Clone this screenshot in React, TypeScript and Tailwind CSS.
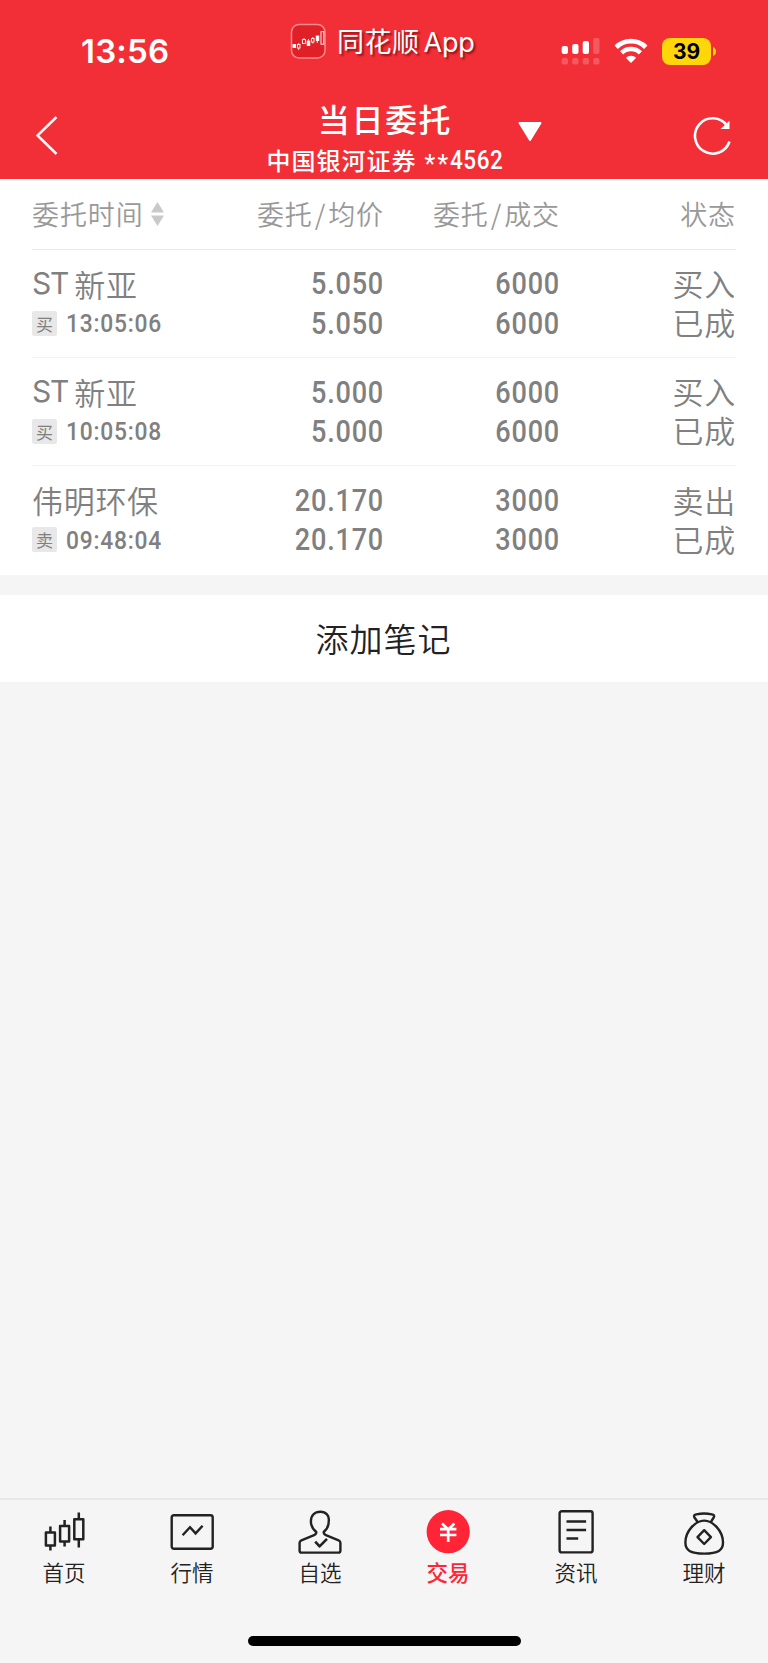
import type { ReactNode } from "react";

interface Order {
  name: ReactNode;
  side: string;
  time: string;
  prices: [string, string];
  amounts: [string, string];
  status: [string, string];
}

const stXinya = (
  <>
    <span className="mr-[6px] font-['Inter'] text-[30px] font-normal tracking-[-1.2px]">ST</span>新亚
  </>
);

const orders: Order[] = [
  { name: stXinya, side: "买", time: "13:05:06", prices: ["5.050", "5.050"], amounts: ["6000", "6000"], status: ["买入", "已成"] },
  { name: stXinya, side: "买", time: "10:05:08", prices: ["5.000", "5.000"], amounts: ["6000", "6000"], status: ["买入", "已成"] },
  { name: "伟明环保", side: "卖", time: "09:48:04", prices: ["20.170", "20.170"], amounts: ["3000", "3000"], status: ["卖出", "已成"] },
];

function AppLogo() {
  return (
    <svg width="36" height="36" viewBox="0 0 36 36" fill="none">
      <rect x="1.5" y="1.500" width="33.500" height="33.500" rx="7.500" fill="#e01f26" stroke="#fa8a8d" strokeWidth="1.500" />
      <g stroke="#fff" strokeWidth="0.900">
        <rect x="3" y="21.500" width="2.600" height="3" fill="#fff" />
        <path d="M8.700 20v1.500M8.700 25v2M14 15v1.500M18.500 16v1.500M22.800 14v1.500M22.800 19v1.500M27.300 18v2" />
        <rect x="7.400" y="21.500" width="2.600" height="3.500" />
        <rect x="12.400" y="16.500" width="3" height="4" />
        <rect x="17.200" y="18" width="2.600" height="4.500" fill="#fff" />
        <rect x="21.600" y="15.500" width="2.400" height="3.500" />
        <rect x="26.200" y="13" width="2.600" height="4.500" fill="#fff" />
        <rect x="31" y="8.700" width="2.800" height="12.500" />
      </g>
    </svg>
  );
}

function SignalIcon() {
  return (
    <svg width="40" height="28" viewBox="0 0 40 28" fill="#fff">
      <rect x="0.700" y="9" width="6.300" height="8" rx="2" />
      <rect x="11.200" y="7" width="6.300" height="10" rx="2" />
      <rect x="21.700" y="4" width="6.300" height="13" rx="2" />
      <g opacity=".2">
        <rect x="32.200" y="1" width="6.300" height="16" rx="2" />
        <rect x="0.700" y="21" width="6.300" height="6.500" rx="2" />
        <rect x="11.200" y="21" width="6.300" height="6.500" rx="2" />
        <rect x="21.700" y="21" width="6.300" height="6.500" rx="2" />
        <rect x="32.200" y="21" width="6.300" height="6.500" rx="2" />
      </g>
    </svg>
  );
}

function WifiIcon() {
  return (
    <svg width="34" height="26" viewBox="0 0 34 26" fill="none">
      <path d="M2.200 9.200a21.200 21.200 0 0 1 29.600 0" stroke="#fff" strokeWidth="4.800" />
      <path d="M7.600 14.800a13.500 13.500 0 0 1 18.800 0" stroke="#fff" strokeWidth="4.600" />
      <path d="M17 25l-5.200-5.200a7.500 7.500 0 0 1 10.400 0z" fill="#fff" />
    </svg>
  );
}

function CandlesIcon() {
  return (
    <svg width="42" height="42" viewBox="0 0 42 42" fill="none" stroke="#222" strokeWidth="2.500" strokeLinejoin="round">
      <rect x="2.900" y="20.500" width="9" height="13" />
      <rect x="17.100" y="14" width="9" height="15.500" />
      <rect x="31.300" y="7.200" width="9" height="20" />
      <path d="M7.400 14.500v6M7.400 33.500v5M21.600 8v6M21.600 29.500v5M35.800.5v6.700M35.800 27.200v8.300" />
    </svg>
  );
}

function MarketIcon() {
  return (
    <svg width="44" height="44" viewBox="0 0 44 44" fill="none" stroke="#222" strokeWidth="2.400">
      <rect x="1.700" y="5.200" width="41" height="33.600" rx="2.200" />
      <path d="M12.600 25.200l7.400-7.900 5.600 6.100 7-7.700" />
    </svg>
  );
}

function PersonIcon() {
  return (
    <svg width="44" height="44" viewBox="0 0 44 44" fill="none" stroke="#222" strokeWidth="2.400" strokeLinejoin="round">
      <path d="M18.300 22c0 1.700-.7 2.500-2.200 3.100L3.400 30.300c-1.200.5-1.800 1.200-1.800 2.400v8c0 1.300.6 1.900 1.900 1.900h37c1.300 0 1.900-.6 1.900-1.900v-8c0-1.200-.6-1.900-1.800-2.400l-12.700-5.200c-1.500-.6-2.200-1.400-2.200-3.100 2.800-2.300 5-5.200 5-10.500C31.700 5.400 27.900 1.800 22.300 1.800s-9.400 3.600-9.400 9.700c0 5.300 2.600 8.200 5.400 10.500z" />
      <path d="M17.200 31.600l4.400 4.800 7.400-7.600" strokeWidth="2.600" />
    </svg>
  );
}

function TradeIcon() {
  return (
    <svg width="44" height="44" viewBox="0 0 44 44" fill="none">
      <circle cx="22.200" cy="21.700" r="21.600" fill="#ff2436" />
      <path d="M16 13.500L22.200 19.500l6.200-6M14 19.200h16.400M14 25h16.400M22.200 19v13" stroke="#fff" strokeWidth="2.700" />
    </svg>
  );
}

function NewsIcon() {
  return (
    <svg width="44" height="44" viewBox="0 0 44 44" fill="none" stroke="#222" strokeWidth="2.400">
      <rect x="5.600" y="1.200" width="33" height="41.200" rx="2.200" />
      <path d="M12.500 11.500h19.600M12.500 20h19.600M12.500 28.500h11.700" />
    </svg>
  );
}

function MoneyBagIcon() {
  return (
    <svg className="overflow-visible" width="44" height="44" viewBox="0 0 44 44" fill="none" stroke="#222" strokeWidth="2.400" strokeLinejoin="round">
      <path d="M16 12.500L12.300 7.200c-.8-1.700.2-2.500 2-2.900 5-1.100 10.600-1.100 15.600 0 1.800.4 2.800 1.200 2 2.900L28.600 12.500" />
      <path d="M22.200 10.600c-8.500 0-18.800 10.200-18.800 22 0 7.600 4.700 11 18.800 11s18.800-3.400 18.800-11c0-11.800-10.300-22-18.800-22z" />
      <path d="M22.200 20.200l6.700 6.900-6.700 6.900-6.700-6.900z" />
    </svg>
  );
}

const tabs: { label: string; icon: ReactNode; active?: boolean }[] = [
  { label: "首页", icon: <CandlesIcon /> },
  { label: "行情", icon: <MarketIcon /> },
  { label: "自选", icon: <PersonIcon /> },
  { label: "交易", icon: <TradeIcon />, active: true },
  { label: "资讯", icon: <NewsIcon /> },
  { label: "理财", icon: <MoneyBagIcon /> },
];

function StatusBar() {
  return (
    <div className="flex h-[88px] items-start">
      <time className="ml-[81px] mt-[31px] w-[209px] font-['Inter'] text-[33px] font-semibold leading-[40px] tracking-[0.2px]">13:56</time>
      <div className="mt-[23px] flex h-9 w-[271px] items-center">
        <AppLogo />
        <span className="ml-[11px] flex items-center whitespace-nowrap [text-shadow:2px_2px_2px_rgba(90,0,0,0.6)]">
          <span className="text-[27px] leading-9 tracking-[0.500px]">同花顺</span>
          <span className="ml-[4px] mt-[3px] font-['Inter'] text-[27px] leading-9 tracking-[-0.200px]">App</span>
        </span>
      </div>
      <div className="mt-[37px] flex h-7 items-center">
        <SignalIcon />
        <span className="ml-[13px]"><WifiIcon /></span>
        <span className="ml-[14px] flex h-[27px] w-[49px] items-center justify-center rounded-[8px] bg-[#ffd60a] font-['Inter'] text-[21px] font-bold leading-none text-black">39</span>
        <svg className="ml-[2px]" width="3" height="9" viewBox="0 0 3 9"><path d="M0 0q3 1.500 3 4.500T0 9z" fill="#ffd60a" /></svg>
      </div>
    </div>
  );
}

function TitleBar() {
  return (
    <div className="flex h-[91px] items-start">
      <svg className="ml-[34px] mt-[27px]" width="26" height="42" viewBox="0 0 26 42" fill="none">
        <path d="M22.500 2L3.500 20.500l19 18.500" stroke="#fff" strokeWidth="2.500" />
      </svg>
      <div className="ml-[190px] mt-[9px] flex w-[268px] flex-col items-center">
        <h1 className="h-11 pl-[2px] text-[32px] font-medium leading-[43px] tracking-[1.600px]">当日委托</h1>
        <p className="mt-px flex h-9 items-center whitespace-nowrap text-[24px] font-medium leading-9 tracking-[1px]">
          中国银河证券
          <span className="ml-[8px] mt-[10px] font-['Roboto'] text-[25px] font-normal tracking-[2.200px]">**</span>
          <span className="mt-[2px] w-[51px] origin-left scale-x-[0.9] font-['Roboto'] text-[25px] tracking-[0.600px]">4562</span>
        </p>
      </div>
      <svg className="mt-[33px]" width="24" height="22" viewBox="0 0 24 22">
        <path d="M1.500 2h21L12 19z" fill="#fff" stroke="#fff" strokeWidth="2" strokeLinejoin="round" />
      </svg>
      <svg className="ml-[151px] mt-[28px]" width="40" height="42" viewBox="0 0 40 42" fill="none">
        <path d="M36.500 25.500A17.700 17.700 0 1 1 34 9.500" stroke="#fff" strokeWidth="2.600" />
        <path d="M36.500 4.800v8.200h-9z" fill="#fff" />
      </svg>
    </div>
  );
}

function NumberPair({ values }: { values: [string, string] }) {
  return (
    <div className="origin-right scale-x-[0.86] text-right font-['Roboto'] text-[31.500px] font-medium leading-[39.200px] tracking-[0.900px]">
      <div>{values[0]}</div>
      <div>{values[1]}</div>
    </div>
  );
}

function OrderRow({ order, last }: { order: Order; last: boolean }) {
  return (
    <div className={`grid h-[108.200px] grid-cols-4 items-center ${last ? "" : "border-b border-[#f3f3f3]"}`}>
      <div>
        <div className="-mt-[2px] flex h-[41px] items-center text-[31px] font-[350] leading-[39px] tracking-[0.700px]">{order.name}</div>
        <div className="flex h-[39px] items-center">
          <span className="flex size-[25px] items-center justify-center rounded-[2px] bg-[#e8e8e8] text-[17px] leading-none">{order.side}</span>
          <span className="-mt-px flex w-[105px] origin-right scale-x-[0.86] justify-end whitespace-nowrap font-['Roboto'] text-[26.500px] font-medium tracking-[0.900px]">{order.time}</span>
        </div>
      </div>
      <NumberPair values={order.prices} />
      <NumberPair values={order.amounts} />
      <div className="pt-[3px] text-right font-['Roboto','Noto_Sans_CJK_SC',sans-serif] text-[31px] font-[350] leading-[39.300px] tracking-[0.800px]">
        <div>{order.status[0]}</div>
        <div>{order.status[1]}</div>
      </div>
    </div>
  );
}

export default function App() {
  return (
    <div className="flex h-[1663px] w-[768px] flex-col overflow-hidden bg-[#f5f5f5] font-['Noto_Sans_CJK_SC',sans-serif]">
      <header className="h-[179px] shrink-0 bg-[#f22f37] text-white">
        <StatusBar />
        <TitleBar />
      </header>
      <main className="flex grow flex-col">
        <section className="h-[396px] bg-white px-8 text-[#808080]">
          <div className="grid h-[71px] grid-cols-4 items-center border-b border-[#e9e9e9] text-right text-[27px] font-[350] leading-[40px] tracking-[0.900px] text-[#999]">
            <div className="flex items-center">
              委托时间
              <svg className="ml-[7px]" width="13" height="24" viewBox="0 0 13 24" fill="#c9c9c9">
                <path d="M6.500 0L13 10.500H0zM0 13.500h13L6.500 24z" />
              </svg>
            </div>
            <div>委托<span className="mx-[2px]">/</span>均价</div>
            <div>委托<span className="mx-[2px]">/</span>成交</div>
            <div>状态</div>
          </div>
          {orders.map((order, i) => (
            <OrderRow key={order.time} order={order} last={i === orders.length - 1} />
          ))}
        </section>
        <button className="mt-5 h-[87px] bg-white pr-px text-[33px] font-[350] leading-[86px] tracking-[1px] text-[#222]"><span className="block h-[87px]">添加笔记</span></button>
      </main>
      <nav className="flex h-[165px] shrink-0 flex-col items-center border-t-2 border-[#e8e8e8]">
        <div className="grid h-[136px] w-full grid-cols-6">
          {tabs.map((tab) => (
            <div key={tab.label} className="flex flex-col items-center pt-[10px]">
              <div className="flex h-11 items-end">{tab.icon}</div>
              <span className={`mt-[2px] text-[21.500px] leading-8 ${tab.active ? "font-medium text-[#ff2436]" : "font-[350] text-[#222]"}`}>{tab.label}</span>
            </div>
          ))}
        </div>
        <div className="h-[10px] w-[273px] rounded-full bg-black" />
      </nav>
    </div>
  );
}
